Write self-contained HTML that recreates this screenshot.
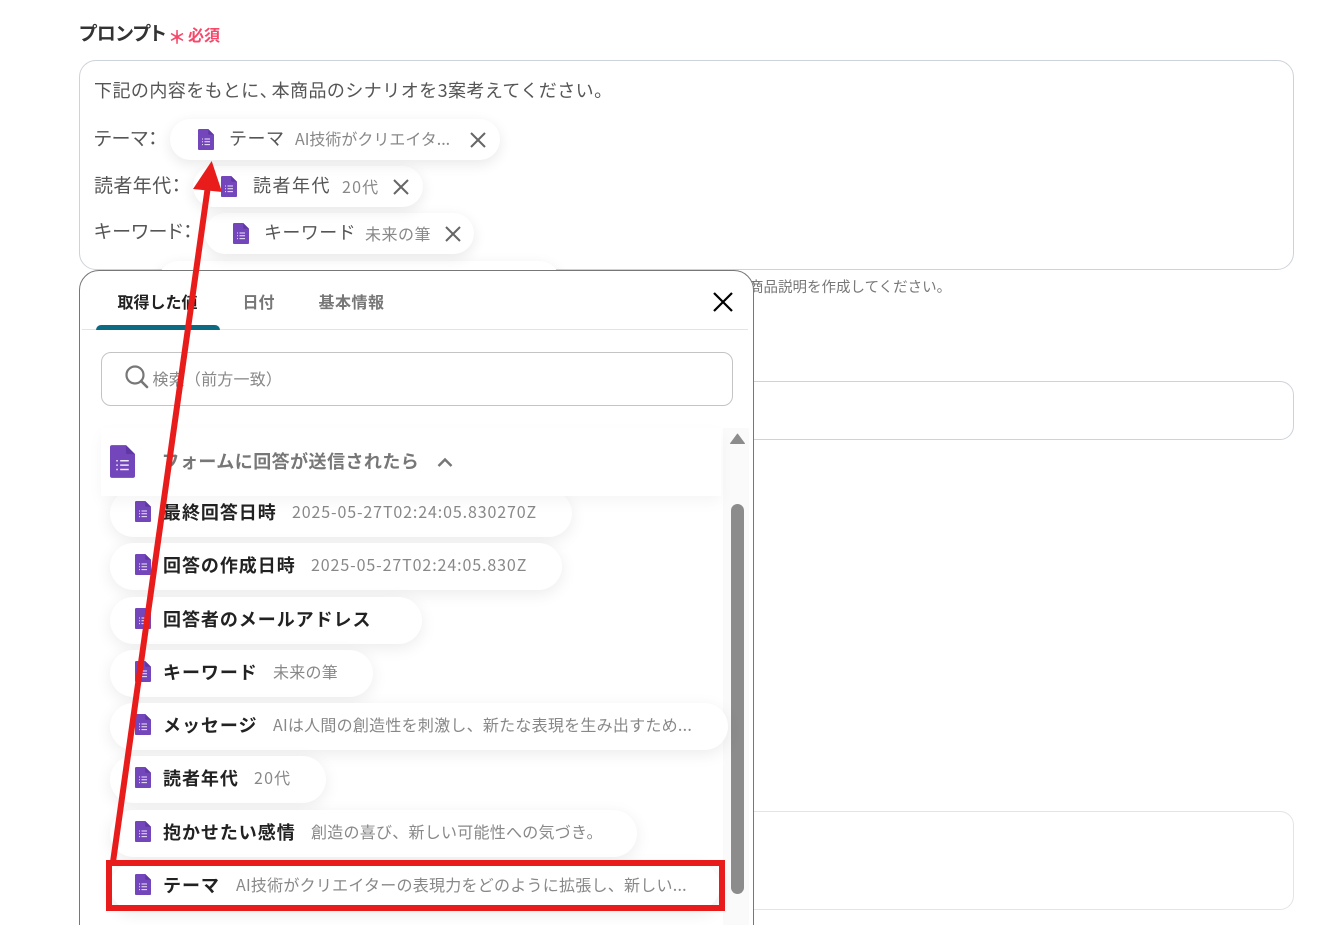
<!DOCTYPE html>
<html lang="ja"><head><meta charset="utf-8"><title>プロンプト</title>
<style>
html,body{margin:0;padding:0;background:#fff}
#p{position:relative;width:1342px;height:925px;overflow:hidden;background:#fff;font-family:"Noto Sans CJK JP","Liberation Sans",sans-serif}
.a{position:absolute;box-sizing:border-box}
.t{position:absolute;white-space:nowrap;line-height:30px;height:30px}
.pa{font-feature-settings:"palt"}
.l{font-size:19px;color:#555;letter-spacing:.4px}
.k{font-size:18px;color:#555;letter-spacing:.5px}
.v{font-size:16px;color:#888;letter-spacing:.25px}
.b{font-size:18px;color:#222;font-weight:700;letter-spacing:.95px}
.c{position:absolute;height:41px;border-radius:21px;background:#fff;box-shadow:0 4px 14px rgba(0,0,0,.09)}
.r{position:absolute;left:30px;height:47px;border-radius:24px;background:#fff;box-shadow:0 4px 16px rgba(0,0,0,.08)}
.ic{position:absolute;width:16px;height:21px}
svg{display:block}
</style></head><body>
<div id="p">
<svg width="0" height="0" style="position:absolute"><defs>
<symbol id="f" viewBox="0 0 16 21"><path d="M1.3 0H10.2L16 5.8V19.7A1.3 1.3 0 0 1 14.7 21H1.3A1.3 1.3 0 0 1 0 19.7V1.3A1.3 1.3 0 0 1 1.3 0Z" fill="#7446bb"/><path d="M10.2 0 16 5.8H11.2A1 1 0 0 1 10.2 4.8Z" fill="#5f38a5"/><path d="M4 10H5M6.500 10H12M4 12.800H5M6.500 12.800H12M4 15.600H5M6.500 15.600H12" stroke="#eee8f8" stroke-width="1"/></symbol>
<symbol id="x" viewBox="0 0 16 16"><path d="M1 1 15 15M15 1 1 15" fill="none" stroke="#666" stroke-width="2"/></symbol>
</defs></svg>

<div class="t pa" style="left:79px;top:18px;font-size:19px;font-weight:700;color:#333">プロンプト</div>
<div class="t" style="left:168px;top:22px;font-size:18px;font-weight:700;color:#f5496b">＊</div>
<div class="t" style="left:188px;top:19px;font-size:16px;font-weight:700;color:#f5496b">必須</div>

<div class="a" style="left:79px;top:60px;width:1215px;height:210px;border:1px solid #cdd3da;border-radius:17px"></div>
<div class="a" style="left:700px;top:381px;width:594px;height:59px;border:1px solid #cdd3da;border-radius:14px"></div>
<div class="a" style="left:700px;top:811px;width:594px;height:99px;border:1px solid #e4e4e4;border-radius:14px"></div>
<div class="t" style="left:749px;top:272px;font-size:14.500px;color:#777">商品説明を作成してください。</div>

<div class="t" style="left:94px;top:75px;font-size:18px;color:#555;letter-spacing:.44px">下記の内容をもとに<span style="letter-spacing:-6px">、</span>本商品のシナリオを3案考えてください。</div>
<div class="t l pa" style="left:94px;top:123px">テーマ：</div>
<div class="t l pa" style="left:94px;top:170px">読者年代：</div>
<div class="t l pa" style="left:94px;top:216px">キーワード：</div>

<div class="c" style="left:158px;top:261px;width:402px"></div>
<div class="c" style="left:205px;top:213px;width:269px"></div>
<div class="c" style="left:193px;top:166px;width:230px"></div>
<div class="c" style="left:170px;top:119px;width:330px"></div>

<svg class="ic" style="left:197.500px;top:129px"><use href="#f"/></svg>
<div class="t k" style="left:229px;top:123px">テーマ</div>
<div class="t v" style="left:295px;top:123px;letter-spacing:0">AI技術がクリエイタ...</div>
<svg class="a" width="16" height="16" style="left:470px;top:131.500px"><use href="#x"/></svg>

<svg class="ic" style="left:220.500px;top:176px"><use href="#f"/></svg>
<div class="t k" style="left:253px;top:170px;letter-spacing:1.500px">読者年代</div>
<div class="t v" style="left:342px;top:171px;letter-spacing:1.200px">20代</div>
<svg class="a" width="16" height="16" style="left:393px;top:178.500px"><use href="#x"/></svg>

<svg class="ic" style="left:232.500px;top:223px"><use href="#f"/></svg>
<div class="t k" style="left:264px;top:217px;letter-spacing:.4px">キーワード</div>
<div class="t v" style="left:365px;top:218px;letter-spacing:.5px">未来の筆</div>
<svg class="a" width="16" height="16" style="left:445px;top:225.500px"><use href="#x"/></svg>

<!-- panel -->
<div class="a" style="left:79px;top:270px;width:675px;height:690px;background:#fff;border:1.500px solid #777;border-radius:20px;overflow:hidden">
  <div class="a" style="left:2px;top:57.500px;width:666px;height:1px;background:#e4e4e4"></div>
  <div class="a" style="left:15.500px;top:53.500px;width:124px;height:5px;background:#0c6b83;border-radius:5px 5px 0 0"></div>
  <div class="t" style="left:37.500px;top:14.500px;font-size:16px;font-weight:700;color:#222">取得した値</div>
  <div class="t" style="left:162.500px;top:14.500px;font-size:16px;font-weight:700;color:#777">日付</div>
  <div class="t" style="left:238.500px;top:14.500px;font-size:16px;font-weight:700;color:#777;letter-spacing:.5px">基本情報</div>
  <svg class="a" width="20" height="20" style="left:632.500px;top:21px"><path d="M1 1 19 19M19 1 1 19" fill="none" stroke="#000" stroke-width="2.200"/></svg>

  <div class="a" style="left:20.500px;top:80.500px;width:632px;height:54px;border:1px solid #c4c4c4;border-radius:10px"></div>
  <svg class="a" width="24" height="24" style="left:44.500px;top:94px"><circle cx="10" cy="10" r="8.500" fill="none" stroke="#777" stroke-width="2.200"/><path d="M16 16 22 22" stroke="#777" stroke-width="2.600" stroke-linecap="round"/></svg>
  <div class="t" style="left:72.500px;top:91.500px;font-size:16px;color:#888;letter-spacing:.2px">検索（前方一致）</div>

  <!-- scroll track -->
  <div class="a" style="left:642.500px;top:156.500px;width:26px;height:540px;background:#fafafa"></div>
  <svg class="a" width="16" height="12" style="left:649.500px;top:162px"><path d="M7.500 1 14.500 10.500H.5Z" fill="#8c8c8c" stroke="#8c8c8c" stroke-linejoin="round"/></svg>
  <div class="a" style="left:650.500px;top:232.500px;width:13px;height:390px;background:#8c8c8c;border-radius:7px"></div>

  <!-- rows -->
  <div class="r" style="top:218.500px;width:462px"></div>
  <div class="r" style="top:271.500px;width:452px"></div>
  <div class="r" style="top:325.500px;width:312px"></div>
  <div class="r" style="top:378.500px;width:263px"></div>
  <div class="r" style="top:431.500px;width:618px"></div>
  <div class="r" style="top:484.500px;width:216px"></div>
  <div class="r" style="top:538.500px;width:527px"></div>
  <div class="r" style="top:591.500px;width:610px"></div>

  <svg class="ic" style="left:54.500px;top:229.500px"><use href="#f"/></svg>
  <div class="t b" style="left:83px;top:225.500px">最終回答日時</div>
  <div class="t v" style="left:212px;top:225px;letter-spacing:.88px">2025-05-27T02:24:05.830270Z</div>

  <svg class="ic" style="left:54.500px;top:282.500px"><use href="#f"/></svg>
  <div class="t b" style="left:83px;top:278.500px">回答の作成日時</div>
  <div class="t v" style="left:231px;top:278px;letter-spacing:.9px">2025-05-27T02:24:05.830Z</div>

  <svg class="ic" style="left:54.500px;top:336.500px"><use href="#f"/></svg>
  <div class="t b" style="left:83px;top:332.500px">回答者のメールアドレス</div>

  <svg class="ic" style="left:54.500px;top:389.500px"><use href="#f"/></svg>
  <div class="t b" style="left:83px;top:385.500px">キーワード</div>
  <div class="t v" style="left:193px;top:385px">未来の筆</div>

  <svg class="ic" style="left:54.500px;top:442.500px"><use href="#f"/></svg>
  <div class="t b" style="left:83px;top:438.500px">メッセージ</div>
  <div class="t v" style="left:193px;top:438px">AIは人間の創造性を刺激し、新たな表現を生み出すため...</div>

  <svg class="ic" style="left:54.500px;top:495.500px"><use href="#f"/></svg>
  <div class="t b" style="left:83px;top:491.500px">読者年代</div>
  <div class="t v" style="left:174px;top:491px;letter-spacing:1.200px">20代</div>

  <svg class="ic" style="left:54.500px;top:549.500px"><use href="#f"/></svg>
  <div class="t b" style="left:83px;top:545.500px">抱かせたい感情</div>
  <div class="t v" style="left:231px;top:545px">創造の喜び、新しい可能性への気づき。</div>

  <svg class="ic" style="left:54.500px;top:602.500px"><use href="#f"/></svg>
  <div class="t b" style="left:83px;top:598.500px">テーマ</div>
  <div class="t v" style="left:156px;top:598px">AI技術がクリエイターの表現力をどのように拡張し、新しい...</div>

  <!-- section header -->
  <div class="a" style="left:20.500px;top:156.500px;width:620px;height:68px;background:#fff;box-shadow:0 6px 14px rgba(0,0,0,.04)"></div>
  <svg class="a" width="25" height="33" style="left:29.500px;top:173.500px"><use href="#f"/></svg>
  <div class="t" style="left:81.500px;top:174.500px;font-size:18px;font-weight:700;color:#777;letter-spacing:.45px">フォームに回答が送信されたら</div>
  <svg class="a" width="16" height="11" style="left:356.500px;top:185.500px"><path d="M1.500 9 8 2.500 14.500 9" fill="none" stroke="#777" stroke-width="2.500"/></svg>
</div>

<!-- annotations -->
<svg class="a" width="1342" height="925" style="left:0;top:0">
  <path d="M113 862 208 186" stroke="#e91c1c" stroke-width="6" fill="none"/>
  <path d="M211.700 161 193 189 222 192Z" fill="#e91c1c"/>
  <rect x="109" y="863" width="613" height="45" fill="none" stroke="#e91c1c" stroke-width="6"/>
</svg>
</div>
</body></html>
